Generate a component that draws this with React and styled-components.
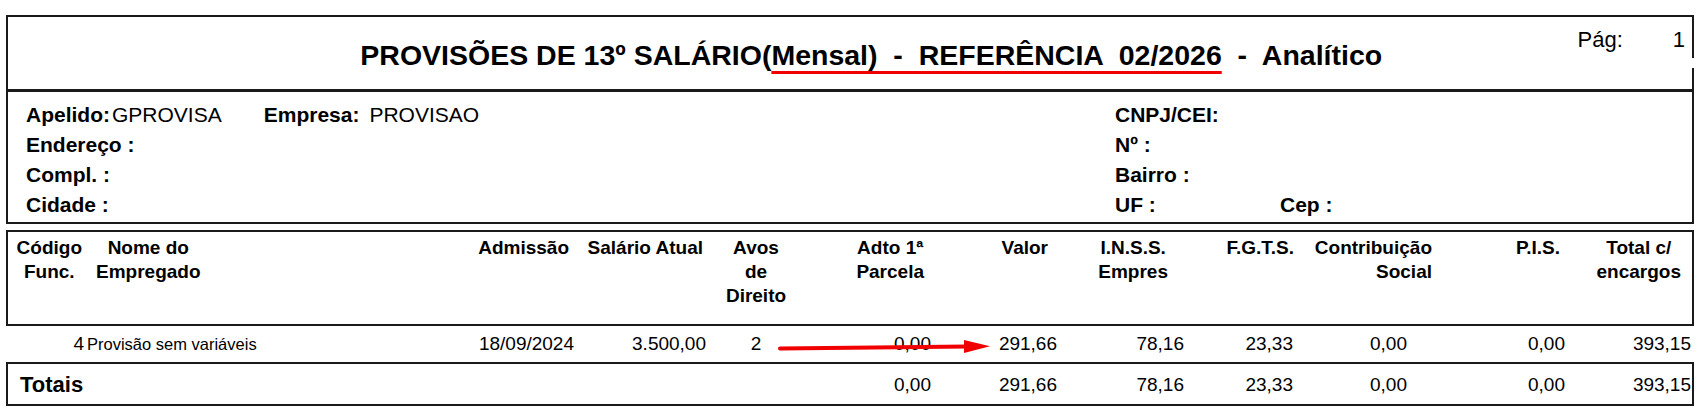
import React from "react";
import styled, { createGlobalStyle } from "styled-components";

const GlobalStyle = createGlobalStyle`
  body {
    margin: 0;
    background: #fff;
    color: #000;
    font-family: "Liberation Sans", Arial, sans-serif;
  }
`;

const Page = styled.div`
  width: 1688px;
  padding: 15px 0 0 6px;
`;

const HeaderBox = styled.div`
  position: relative;
  display: flex;
  height: 72px;
  border: 2px solid #1a1a1a;
  border-bottom-width: 3px;

  &::after {
    content: "";
    position: absolute;
    right: -4px;
    top: 41px;
    width: 6px;
    height: 10px;
    background: #fff;
  }
`;

const Title = styled.h1`
  flex: 1;
  margin: 0;
  padding: 4px 0 0 157px;
  align-self: center;
  text-align: center;
  font-size: 28.5px;
  font-weight: bold;
  white-space: pre;
`;

const Marked = styled.span`
  text-decoration: underline;
  text-decoration-color: #f00000;
  text-decoration-thickness: 3px;
  text-underline-offset: 6px;
`;

const PageNo = styled.div`
  display: flex;
  gap: 50px;
  margin-top: 10px;
  padding-right: 7px;
  font-size: 22px;
  line-height: 26px;
`;

const InfoBox = styled.div`
  display: grid;
  grid-template-columns: 1089px 1fr;
  padding: 8px 0 2px 18px;
  border: 2px solid #1a1a1a;
  border-top: none;
  font-size: 21px;
  line-height: 30px;
`;

const InfoCol = styled.div`
  display: flex;
  flex-direction: column;
`;

const InfoRow = styled.div`
  display: flex;
  white-space: pre;
`;

const Label = styled.span`
  font-weight: bold;
  width: ${(p) => (p.$w ? `${p.$w}px` : "auto")};
  margin-right: ${(p) => p.$gap || 0}px;
`;

const Value = styled.span`
  margin-right: ${(p) => p.$gap || 0}px;
`;

const HeadBox = styled.div`
  display: grid;
  grid-template-columns: ${(p) => p.$cols};
  margin-top: 6px;
  padding-top: 4px;
  box-sizing: border-box;
  height: 96px;
  border: 2px solid #1a1a1a;
  font-size: 19px;
  font-weight: bold;
  line-height: 24px;
`;

const Cell = styled.div`
  text-align: ${(p) => p.$align};
  padding-left: ${(p) => (p.$align === "left" ? p.$pad : 0)}px;
  padding-right: ${(p) => (p.$align === "right" ? p.$pad : 0)}px;
  white-space: nowrap;
`;

const HeadText = styled.span`
  display: inline-block;
  text-align: ${(p) => p.$inner || "center"};
`;

const DataRow = styled.div`
  position: relative;
  display: grid;
  grid-template-columns: ${(p) => p.$cols};
  align-items: baseline;
  height: 36px;
  box-sizing: border-box;
  padding: 6px 2px 0;
  font-size: 19px;
  line-height: 24px;
`;

const Code = styled.span`
  font-size: 19px;
`;

const Name = styled.span`
  font-size: 16.5px;
`;

const Arrow = styled.svg`
  position: absolute;
  left: 772px;
  top: 12px;
`;

const TotalsBox = styled.div`
  display: grid;
  grid-template-columns: ${(p) => p.$cols};
  align-items: center;
  height: 44px;
  box-sizing: border-box;
  padding-top: 2px;
  border: 2px solid #1a1a1a;
  font-size: 19px;
  line-height: 38px;
`;

const TotalsLabel = styled.div`
  grid-column: span 5;
  padding-left: 12px;
  font-size: 22px;
  font-weight: bold;
`;

const columns = [
  { w: 78, head: ["Código", "Func."], hAlign: "right", hPad: 4, dAlign: "right", dPad: 2 },
  { w: 354, head: ["Nome do", "Empregado"], hAlign: "left", hPad: 10, dAlign: "left", dPad: 1 },
  { w: 140, head: ["Admissão"], hAlign: "right", hPad: 11, dAlign: "right", dPad: 6 },
  { w: 132, head: ["Salário Atual"], hAlign: "right", hPad: 9, dAlign: "right", dPad: 6 },
  { w: 88, head: ["Avos", "de", "Direito"], hAlign: "center", hPad: 0, dAlign: "center", dPad: 0 },
  { w: 140, head: ["Adto 1ª", "Parcela"], hAlign: "right", hPad: 16, dAlign: "right", dPad: 9 },
  { w: 122, head: ["Valor"], hAlign: "right", hPad: 14, dAlign: "right", dPad: 5 },
  { w: 128, head: ["I.N.S.S.", "Empres"], hAlign: "right", hPad: 22, dAlign: "right", dPad: 6 },
  { w: 110, head: ["F.G.T.S."], hAlign: "right", hPad: 6, dAlign: "right", dPad: 7 },
  { w: 140, head: ["Contribuição", "Social"], hAlign: "right", hPad: 8, inner: "right", dAlign: "right", dPad: 33 },
  { w: 132, head: ["P.I.S."], hAlign: "right", hPad: 12, dAlign: "right", dPad: 7 },
  { w: 120, head: ["Total c/", "encargos"], hAlign: "right", hPad: 11, dAlign: "right", dPad: 1 },
];

const gridCols = columns.map((c) => `${c.w}px`).join(" ");

const row = ["18/09/2024", "3.500,00", "2", "0,00", "291,66", "78,16", "23,33", "0,00", "0,00", "393,15"];
const totals = ["0,00", "291,66", "78,16", "23,33", "0,00", "0,00", "393,15"];

export default function App() {
  return (
    <>
      <GlobalStyle />
      <Page>
        <HeaderBox>
          <Title>
            {"PROVISÕES DE 13º SALÁRIO("}
            <Marked>{"Mensal)  -  REFERÊNCIA  02/2026"}</Marked>
            {"  -  Analítico"}
          </Title>
          <PageNo>
            <span>Pág:</span>
            <span>1</span>
          </PageNo>
        </HeaderBox>

        <InfoBox>
          <InfoCol>
            <InfoRow>
              <Label $gap={2}>Apelido:</Label>
              <Value $gap={42}>GPROVISA</Value>
              <Label $gap={10}>Empresa:</Label>
              <Value>PROVISAO</Value>
            </InfoRow>
            <InfoRow>
              <Label>Endereço :</Label>
            </InfoRow>
            <InfoRow>
              <Label>Compl. :</Label>
            </InfoRow>
            <InfoRow>
              <Label>Cidade :</Label>
            </InfoRow>
          </InfoCol>
          <InfoCol>
            <InfoRow>
              <Label>CNPJ/CEI:</Label>
            </InfoRow>
            <InfoRow>
              <Label>Nº :</Label>
            </InfoRow>
            <InfoRow>
              <Label>Bairro :</Label>
            </InfoRow>
            <InfoRow>
              <Label $w={165}>UF :</Label>
              <Label>Cep :</Label>
            </InfoRow>
          </InfoCol>
        </InfoBox>

        <HeadBox $cols={gridCols}>
          {columns.map((c) => (
            <Cell key={c.head[0]} $align={c.hAlign} $pad={c.hPad}>
              <HeadText $inner={c.inner}>
                {c.head.map((line, i) => (
                  <React.Fragment key={line}>
                    {i > 0 && <br />}
                    {line}
                  </React.Fragment>
                ))}
              </HeadText>
            </Cell>
          ))}
        </HeadBox>

        <DataRow $cols={gridCols}>
          <Cell $align="right" $pad={columns[0].dPad}>
            <Code>4</Code>
          </Cell>
          <Cell $align="left" $pad={columns[1].dPad}>
            <Name>Provisão sem variáveis</Name>
          </Cell>
          {row.map((v, i) => (
            <Cell key={i} $align={columns[i + 2].dAlign} $pad={columns[i + 2].dPad}>
              {v}
            </Cell>
          ))}
          <Arrow width="216" height="18" viewBox="0 0 216 18">
            <path d="M2 10.5 L190 8.5" stroke="#f00000" strokeWidth="4" strokeLinecap="round" fill="none" />
            <polygon points="186,2 212,8.2 186,15" fill="#f00000" />
          </Arrow>
        </DataRow>

        <TotalsBox $cols={gridCols}>
          <TotalsLabel>Totais</TotalsLabel>
          {totals.map((v, i) => (
            <Cell key={i} $align={columns[i + 5].dAlign} $pad={columns[i + 5].dPad}>
              {v}
            </Cell>
          ))}
        </TotalsBox>
      </Page>
    </>
  );
}
